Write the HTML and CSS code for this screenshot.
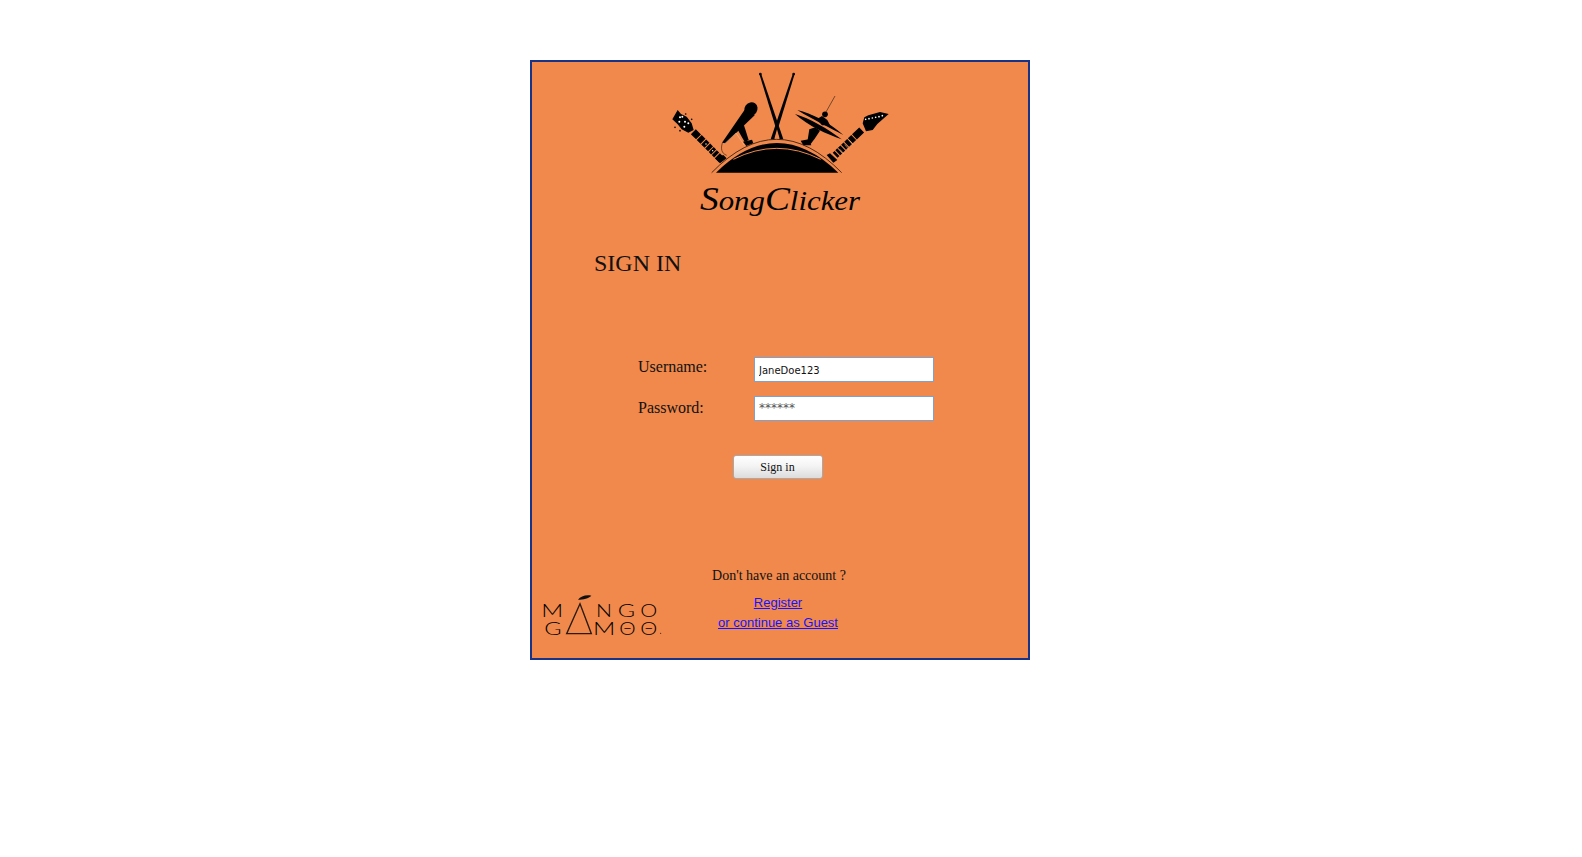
FILE: index.html
```html
<!DOCTYPE html>
<html lang="en">
<head>
<meta charset="utf-8">
<title>SongClicker - Sign in</title>
<link rel="stylesheet" href="styles.css">
</head>
<body>
<main class="panel">
  <svg class="logo" viewBox="0 6 750 504" role="img" aria-label="SongClicker">
    <!-- drum sticks -->
    <polygon points="328,42 333,40 400,238 388,238"/>
    <polygon points="429,40 434,42 374,238 362,238"/>
    <circle cx="331" cy="42" r="4"/>
    <circle cx="431" cy="42" r="4"/>
    <polygon class="cut" points="381,208 373,236 389,236"/>
    <!-- microphone -->
    <ellipse cx="303" cy="147" rx="19" ry="21" transform="rotate(35 303 147)"/>
    <polygon points="286,146 314,166 226,250 216,248"/>
    <polygon points="262,207 280,190 296,240 284,246"/>
    <polygon points="279,245 306,239 310,250 289,258"/>
    <path class="glint" d="M224 251 L258 219 L283 256"/>
    <path class="cord" d="M217 249 C212 266 214 280 230 286"/>
    <!-- cymbals -->
    <line class="thin" x1="555" y1="108" x2="528" y2="156"/>
    <circle cx="525" cy="163" r="8.5"/>
    <path d="M442 150 C485 160 535 186 580 225 C540 203 490 180 442 150 Z"/>
    <path d="M435 162 C480 176 530 204 575 238 C530 222 475 198 435 162 Z"/>
    <polygon points="500,178 516,168 532,180 540,196 516,196"/>
    <polygon points="478,208 496,202 510,212 494,236 482,252 472,246"/>
    <polygon points="452,242 476,238 484,256 460,256"/>
    <!-- left guitar -->
    <polygon points="67,178 83,150 93,162 110,170 125,190 131,210 115,218 95,208 83,193"/>
    <g class="pegs">
      <circle cx="90" cy="172" r="3"/><circle cx="97" cy="170" r="3"/><circle cx="105" cy="185" r="3"/>
      <circle cx="115" cy="190" r="3"/><circle cx="88" cy="185" r="3"/><circle cx="103" cy="200" r="3"/>
    </g>
    <circle cx="107" cy="162" r="2.5"/><circle cx="125" cy="178" r="2.5"/><circle cx="75" cy="202" r="2.5"/><circle cx="90" cy="212" r="2.5"/>
    <line class="neck" x1="130" y1="215" x2="215" y2="300"/>
    <polygon points="195,295 220,285 230,295 210,310"/>
    <g class="pegs">
      <circle cx="168" cy="252" r="2"/><circle cx="188" cy="272" r="2"/>
    </g>
    <!-- right guitar -->
    <polygon points="638,190 643,172 655,166 690,156 716,162 682,192 668,210 648,214"/>
    <g class="pegs">
      <circle cx="647" cy="178" r="2.5"/><circle cx="657" cy="176" r="2.5"/><circle cx="667" cy="174" r="2.5"/>
      <circle cx="677" cy="172" r="2.5"/><circle cx="687" cy="170" r="2.5"/><circle cx="697" cy="167" r="2.5"/>
    </g>
    <line class="neck neck-right" x1="635" y1="210" x2="553" y2="288"/>
    <polygon points="530,285 540,280 562,300 550,308"/>
    <path class="frets" d="M570 268 L582 282 M584 254 L596 268 M598 241 L610 255"/>
    <!-- dome -->
    <path class="outline" d="M185 338 Q380 138 575 338"/>
    <path d="M198 338 Q380 160 565 338 Z"/>
    <path class="arc" d="M250 298 Q380 232 512 298"/>
    <text class="wordmark" x="150" y="450" textLength="480" lengthAdjust="spacingAndGlyphs"><tspan class="wordmark-cap">S</tspan>ong<tspan class="wordmark-cap">C</tspan>licker</text>
  </svg>

  <h1 class="title">SIGN IN</h1>

  <form class="signin">
    <div class="fields">
      <label class="label" for="user">Username:</label>
      <input class="input" id="user" type="text" value="JaneDoe123">
      <label class="label label-low" for="pass">Password:</label>
      <input class="input input-muted" id="pass" type="text" value="******">
    </div>
    <button class="button" type="button">Sign in</button>
  </form>

  <footer class="foot">
    <svg class="mango" viewBox="60 100 390 135" role="img" aria-label="Mango Games">
      <path class="leaf" d="M174 120 C182 110 198 104 214 108 C206 116 190 120 174 120 Z"/>
      <polygon class="tri" points="180,132 214,222 140,222"/>
      <text class="mango-text" x="64" y="172" textLength="66" lengthAdjust="spacingAndGlyphs">M</text>
      <text class="mango-text" x="228" y="172" textLength="48" lengthAdjust="spacingAndGlyphs">N</text>
      <text class="mango-text" x="293" y="172" textLength="52" lengthAdjust="spacingAndGlyphs">G</text>
      <text class="mango-text" x="361" y="172" textLength="51" lengthAdjust="spacingAndGlyphs">O</text>
      <text class="mango-text" x="73" y="225" textLength="52" lengthAdjust="spacingAndGlyphs">G</text>
      <text class="mango-text" x="219" y="225" textLength="67" lengthAdjust="spacingAndGlyphs">M</text>
      <text class="mango-text" x="298" y="225" textLength="49" lengthAdjust="spacingAndGlyphs">Θ</text>
      <text class="mango-text" x="361" y="225" textLength="51" lengthAdjust="spacingAndGlyphs">Θ</text>
      <circle cx="422" cy="221" r="1.5"/>
    </svg>
    <div class="links">
      <p class="ask">Don't have an account ?</p>
      <a class="link" href="#">Register</a>
      <a class="link" href="#">or continue as Guest</a>
    </div>
  </footer>
</main>
</body>
</html>
```
FILE: styles.css
```css
html, body {
  margin: 0;
  background: #fff;
}

body {
  padding: 60px 0 0 530px;
  font-family: "Liberation Serif", serif;
  color: #111;
}

.panel {
  box-sizing: border-box;
  width: 500px;
  height: 600px;
  display: flex;
  flex-direction: column;
  background: #f0894b;
  border: 2px solid #1b3385;
}

.logo {
  display: block;
  width: 250px;
  height: 168px;
  margin-left: 118px;
  flex: none;
}

.cut { fill: #f0894b; }
.cord { fill: none; stroke: #3a2418; stroke-width: 2; }
.glint { fill: none; stroke: #f6c7a6; stroke-width: 1.5; }
.thin { stroke: #3a2418; stroke-width: 2; }
.pegs { fill: #fff; }
.neck {
  stroke: #000;
  stroke-width: 21;
  stroke-dasharray: 22 3 16 3 14 3 12 3 10 3 10 3;
}
.neck-right { stroke-dasharray: 30 3 14 3 12 3 10 3 10 3 8 3 8 3; }
.frets { fill: none; stroke: #f6c7a6; stroke-width: 1.5; }
.outline { fill: none; stroke: #2b1a10; stroke-width: 2.5; }
.arc { fill: none; stroke: #f0894b; stroke-width: 3; }
.wordmark {
  font-family: "Liberation Serif", serif;
  font-style: italic;
  font-size: 84px;
  fill: #000;
}
.wordmark-cap { font-size: 102px; }

.title {
  margin: 19px 0 0 62px;
  font-size: 24px;
  line-height: 28px;
  font-weight: 400;
}

.signin {
  display: flex;
  flex-direction: column;
  margin-top: 80px;
}

.fields {
  display: grid;
  grid-template-columns: 116px 180px;
  grid-template-rows: 25px 25px;
  row-gap: 14px;
  margin-left: 106px;
  align-items: start;
}

.label {
  padding-top: 1px;
  font-size: 16px;
  line-height: 18px;
}

.label-low { padding-top: 3px; }

.input {
  box-sizing: border-box;
  width: 180px;
  height: 25px;
  padding: 2px 4px 0;
  border: 1px solid #7da2ce;
  background: #fff;
  font-family: "DejaVu Sans", sans-serif;
  font-size: 10px;
  color: #111;
  outline: none;
}

.input-muted {
  padding: 0 4px 2px;
  color: #555;
  font-size: 12px;
}

.button {
  box-sizing: border-box;
  width: 90px;
  height: 24px;
  margin: 34px 0 0 201px;
  padding: 0 1px 0 0;
  border: 1px solid #a9a9a9;
  border-radius: 3px;
  background: linear-gradient(#fff 0%, #f4f4f4 45%, #dcdcdc 100%);
  font-family: "Liberation Serif", serif;
  font-size: 12px;
  color: #111;
}

.foot {
  display: flex;
  align-items: flex-start;
  margin: 89px 0 0 8px;
}

.mango {
  width: 130px;
  height: 45px;
  margin-top: 25px;
  flex: none;
  fill: #000;
}

.leaf { fill: #111; }
.tri { fill: none; stroke: #2a1a10; stroke-width: 4; }
.mango-text {
  font-family: "Lato", sans-serif;
  font-weight: 300;
  font-size: 54px;
  fill: #000;
}

.links {
  width: 216px;
  display: flex;
  flex-direction: column;
  align-items: center;
}

.ask {
  margin: 0 0 9px;
  padding-left: 2px;
  font-size: 14px;
  line-height: 16px;
}

.link {
  font-family: "Liberation Sans", sans-serif;
  font-size: 13px;
  line-height: 20px;
  color: #1414ff;
}
```
